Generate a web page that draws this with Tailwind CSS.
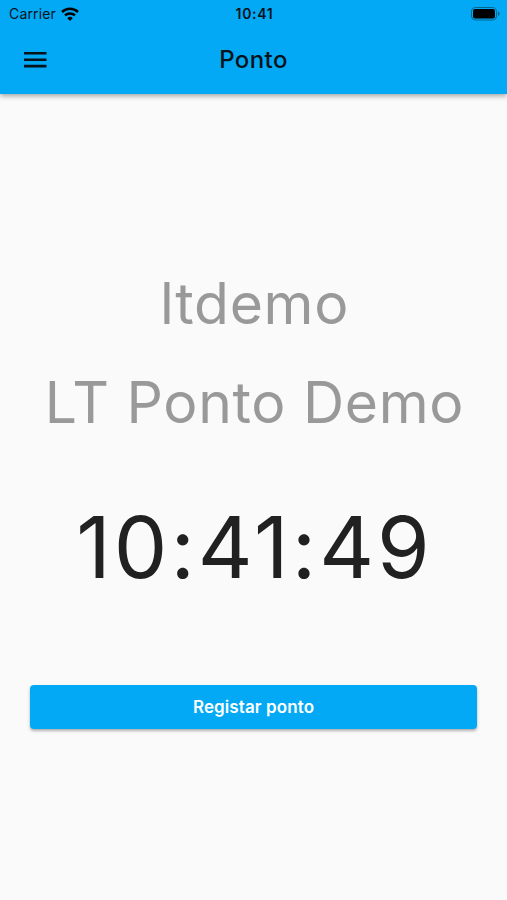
<!DOCTYPE html>
<html lang="pt">
<head>
  <meta charset="UTF-8">
  <title>Ponto</title>
  <script src="https://cdn.jsdelivr.net/npm/@tailwindcss/browser@4"></script>
  <style>
    body { font-family: 'Inter', sans-serif; }
  </style>
</head>
<body class="bg-[#fafafa] h-[900px] overflow-hidden flex flex-col">
  <header class="h-[94px] shrink-0 bg-[#03a9f4] text-[#06131b] shadow-[0_2px_5px_rgba(0,0,0,0.35)]">
    <!-- Barra de estado -->
    <div class="h-[27px] grid grid-cols-3 items-center pl-[9px] pr-[7px]">
      <div class="flex items-center gap-[5px]">
        <span class="text-[14px] leading-7 tracking-[0.15px]">Carrier</span>
        <svg class="w-[18px] h-[14px]" viewBox="0 0 18 14" fill="none" stroke="#000" stroke-width="2.5">
          <path d="M1 5a11.4 11.4 0 0 1 16 0"/>
          <path d="M4 8.4a7.2 7.2 0 0 1 10 0"/>
          <path d="M9 14l-2.7-2.8a3.8 3.8 0 0 1 5.4 0z" fill="#000" stroke="none"/>
        </svg>
      </div>
      <span class="text-[14px] leading-7 font-semibold text-center tracking-[0.7px]">10:41</span>
      <svg class="w-[29px] h-[14px] justify-self-end" viewBox="0 0 29 14">
        <rect x="0.5" y="0.5" width="25" height="12.5" rx="3.8" fill="none" stroke="#000" stroke-opacity="0.4"/>
        <rect x="2" y="2" width="22" height="9.5" rx="2.2" fill="#000"/>
        <path d="M27 4.6v4.4q1.6-.8 1.6-2.2T27 4.6z" fill="#000" fill-opacity="0.45"/>
      </svg>
    </div>
    <!-- Título -->
    <div class="h-[66px] grid grid-cols-3 items-center px-6">
      <svg class="w-[23px] h-4" viewBox="0 0 23 16" fill="#06131b">
        <path d="M0 0h22.5v2.6H0zM0 6.4h22.5v2.6H0zM0 12.8h22.5v2.6H0z"/>
      </svg>
      <h1 class="text-[24px] font-medium text-center tracking-[0.4px]">Ponto</h1>
    </div>
  </header>
  <main class="flex flex-col items-center whitespace-nowrap">
    <p class="mt-[170px] pl-0.5 h-20 leading-[80px] text-[57px] tracking-[0.7px] text-[#999]">ltdemo</p>
    <p class="mt-[19px] pl-0.5 h-20 leading-[80px] text-[57px] tracking-[0.7px] text-[#999]">LT Ponto Demo</p>
    <p class="mt-[45px] pl-0.5 h-[120px] leading-[120px] text-[85px] tracking-[3px] text-[#212121]">10:41:49</p>
    <button class="mt-[77px] w-[447px] h-11 pt-0.5 rounded bg-[#03a9f4] text-white text-[17px] font-semibold tracking-[0.1px] shadow-[0_2px_3px_rgba(0,0,0,0.3)]">Registar ponto</button>
  </main>
</body>
</html>
